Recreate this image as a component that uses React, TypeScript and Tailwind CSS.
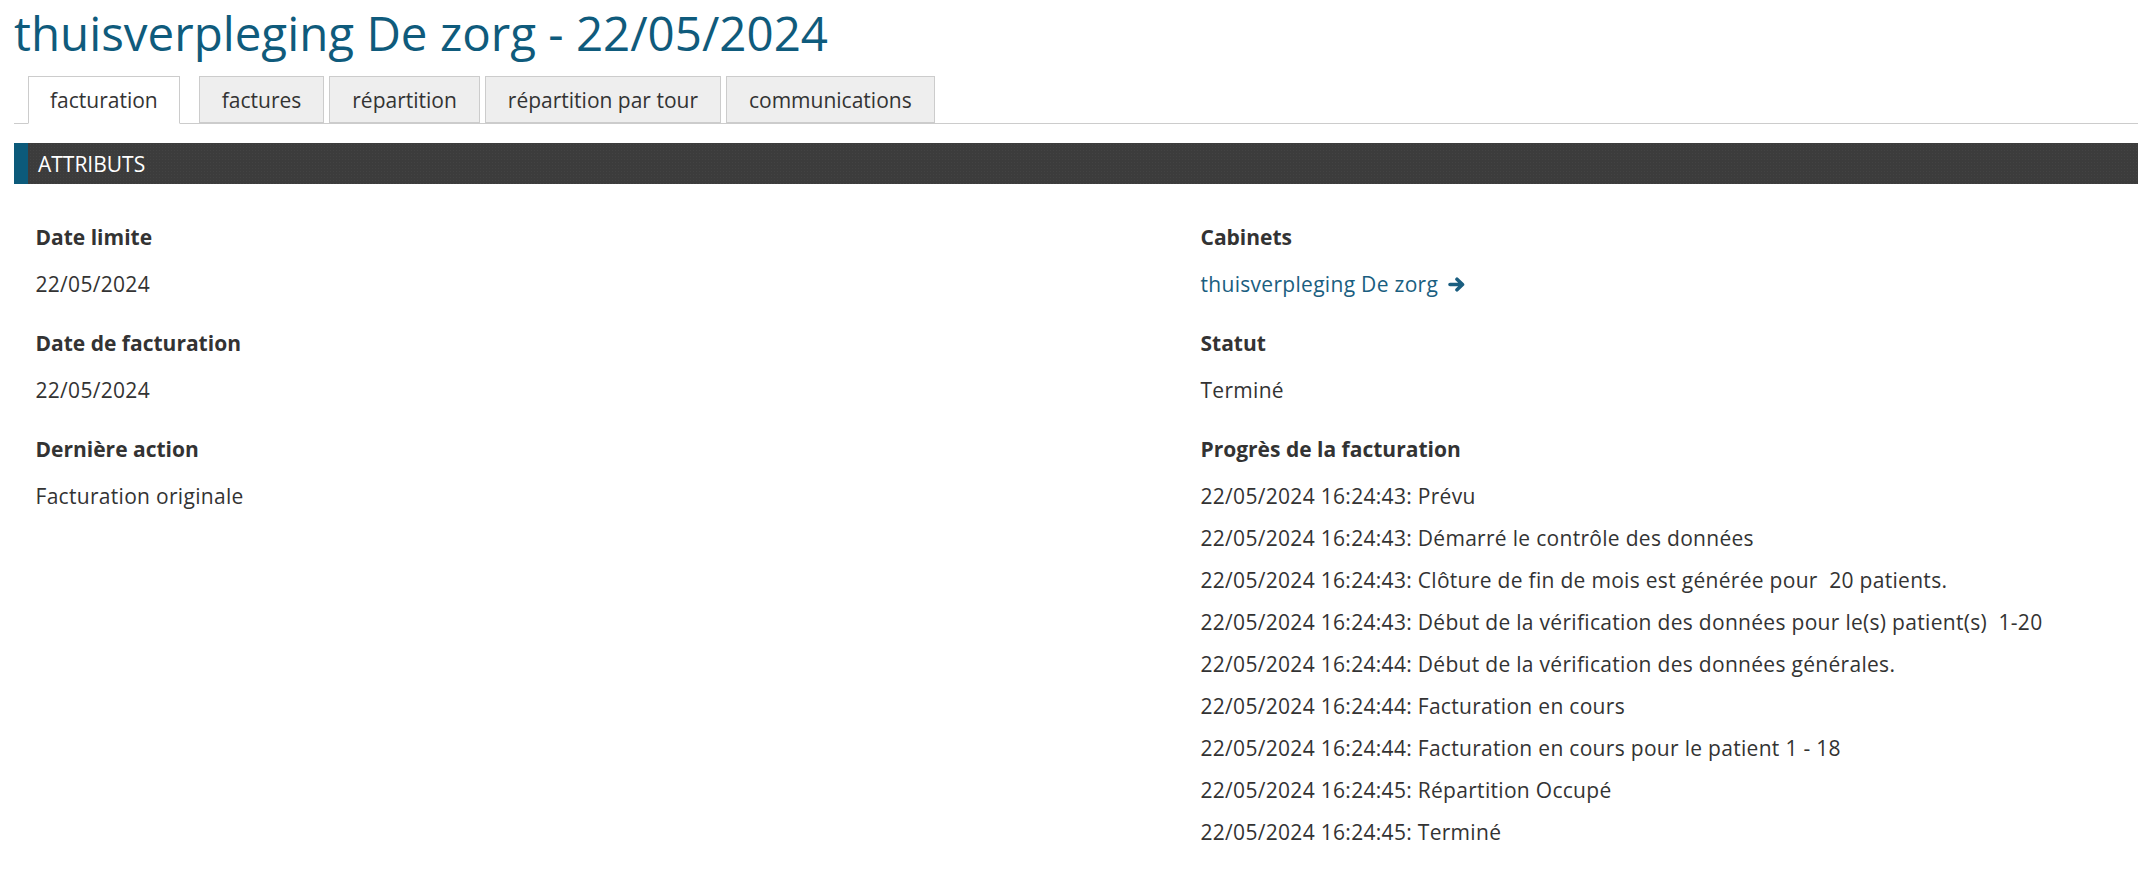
import React from 'react';

const tabs = [
  { id: 'facturation', label: 'facturation' },
  { id: 'factures', label: 'factures' },
  { id: 'repartition', label: 'répartition' },
  { id: 'tour', label: 'répartition par tour' },
  { id: 'communications', label: 'communications' },
];

const progress = [
  '22/05/2024 16:24:43: Prévu',
  '22/05/2024 16:24:43: Démarré le contrôle des données',
  '22/05/2024 16:24:43: Clôture de fin de mois est générée pour  20 patients.',
  '22/05/2024 16:24:43: Début de la vérification des données pour le(s) patient(s)  1-20',
  '22/05/2024 16:24:44: Début de la vérification des données générales.',
  '22/05/2024 16:24:44: Facturation en cours',
  '22/05/2024 16:24:44: Facturation en cours pour le patient 1 - 18',
  '22/05/2024 16:24:45: Répartition Occupé',
  '22/05/2024 16:24:45: Terminé',
];

const ArrowIcon = () => (
  <svg viewBox="0 0 17 15" className="ml-[10px] inline-block h-[15px] w-[17px] align-[0px]" fill="none" stroke="currentColor" strokeWidth="3.6" strokeLinecap="round" strokeLinejoin="round">
    <path d="M2 7.5h12.5M9 2.2l5.5 5.3L9 12.8" />
  </svg>
);

const Field: React.FC<{ label: string; children: React.ReactNode }> = ({ label, children }) => (
  <div className="mb-[29px]">
    <div className="mb-[17px] font-bold">{label}</div>
    <div className="tracking-[0.3px]">{children}</div>
  </div>
);

export default function App() {
  const activeTab = 'facturation';

  return (
    <div className="min-h-screen bg-white pl-[14px] text-[21px] leading-[30px] text-[#333333] font-['Open_Sans','Noto_Sans',sans-serif]">
      <h1 className="pt-[7px] text-[47.5px] leading-[52px] font-normal text-[#0f5b7c]">
        thuisverpleging De zorg - 22/05/2024
      </h1>

      <div className="mt-[17px] flex border-b border-[#cccccc] pl-[14px]">
        {tabs.map((tab) => {
          const active = tab.id === activeTab;
          return (
            <div
              key={tab.id}
              className={
                active
                  ? '-mb-px mr-[19px] border border-[#cccccc] border-b-white bg-white px-[21px] pt-[8px] pb-[8px]'
                  : 'mr-[5px] border border-[#cccccc] bg-[#eeeeee] px-[22px] pt-[8px] pb-[7px]'
              }
            >
              {tab.label}
            </div>
          );
        })}
      </div>

      <div className="mt-[19px] flex h-[41px] items-center bg-[#3c3c3c] bg-[radial-gradient(#434343_1px,transparent_1px)] bg-[length:3px_3px]">
        <div className="h-full w-[14px] bg-[#0c5a7a]" />
        <div className="pl-[10px] uppercase text-white">Attributs</div>
      </div>

      <div className="flex px-[21.5px] pt-[38px]">
        <div className="w-[1165px]">
          <Field label="Date limite">22/05/2024</Field>
          <Field label="Date de facturation">22/05/2024</Field>
          <Field label="Dernière action">Facturation originale</Field>
        </div>
        <div className="flex-1">
          <Field label="Cabinets">
            <a className="text-[#1a5e80]">
              thuisverpleging De zorg
              <ArrowIcon />
            </a>
          </Field>
          <Field label="Statut">Terminé</Field>
          <div>
            <div className="mb-[17px] font-bold">Progrès de la facturation</div>
            <div className="flex flex-col gap-[12px] tracking-[0.3px]">
              {progress.map((line, i) => (
                <div key={i} className="whitespace-pre">
                  {line}
                </div>
              ))}
            </div>
          </div>
        </div>
      </div>
    </div>
  );
}
